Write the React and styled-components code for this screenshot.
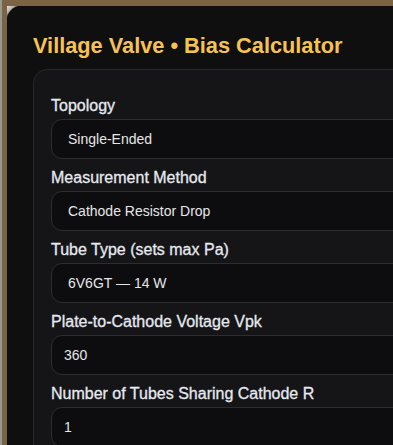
import styled, { createGlobalStyle } from "styled-components";

const GlobalStyle = createGlobalStyle`
    html, body {
        margin: 0;
        padding: 0;
        background: #7b6446;
        overflow: hidden;
    }
    body {
        border-left: 2px solid #9a978f;
        font-family: "Liberation Sans", Arial, sans-serif;
    }
`;

const Page = styled.div`
    padding: 6px 0 0 5px;
    height: 445px;
    box-sizing: border-box;
`;

const Frame = styled.div`
    background: linear-gradient(135deg, #e4e4e2 0, #b9b2a6 5px, #0f0f10 9px);
`;

const Card = styled.div`
    width: 440px;
    min-height: 460px;
    background: #0f0f10;
    border-radius: 14px 0 0 0;
    padding: 27px 0 0 26px;
    box-sizing: border-box;
`;

const Title = styled.h1`
    margin: 0 0 11px;
    font-size: 21.75px;
    line-height: 25px;
    font-weight: 700;
    color: #f8c252;
`;

const Panel = styled.div`
    background: #151518;
    border: 1px solid #27272c;
    border-radius: 14px 0 0 0;
    padding: 27px 0 0 17px;
    display: flex;
    flex-direction: column;
    gap: 10px;
`;

const Field = styled.div`
    display: flex;
    flex-direction: column;
    gap: 4px;
`;

const Label = styled.label`
    font-size: 16px;
    font-weight: 500;
    line-height: 18px;
    color: #e6e9f0;
    -webkit-text-stroke: 0.3px #e6e9f0;
`;

const controlStyles = `
    height: 40px;
    width: 380px;
    box-sizing: border-box;
    background: #0d0d0f;
    border: 1px solid #2c2c31;
    border-radius: 11px;
    color: #e6e6e8;
    font-family: "Liberation Sans", Arial, sans-serif;
    font-size: 14px;
    outline: none;
`;

const Select = styled.select`
    ${controlStyles}
    padding: 0 16px;
    appearance: none;
`;

const Input = styled.input`
    ${controlStyles}
    padding: 0 12px;
`;

const fields = [
    { label: "Topology", type: "select", value: "Single-Ended" },
    { label: "Measurement Method", type: "select", value: "Cathode Resistor Drop" },
    { label: "Tube Type (sets max Pa)", type: "select", value: "6V6GT — 14 W" },
    { label: "Plate-to-Cathode Voltage Vpk", type: "input", value: "360" },
    { label: "Number of Tubes Sharing Cathode R", type: "input", value: "1" },
];

export default function App() {
    return (
        <>
            <GlobalStyle />
            <Page>
                <Frame>
                    <Card>
                        <Title>Village Valve • Bias Calculator</Title>
                        <Panel>
                            {fields.map((f) => (
                                <Field key={f.label}>
                                    <Label>{f.label}</Label>
                                    {f.type === "select" ? (
                                        <Select defaultValue={f.value}>
                                            <option>{f.value}</option>
                                        </Select>
                                    ) : (
                                        <Input type="number" defaultValue={f.value} />
                                    )}
                                </Field>
                            ))}
                        </Panel>
                    </Card>
                </Frame>
            </Page>
        </>
    );
}
